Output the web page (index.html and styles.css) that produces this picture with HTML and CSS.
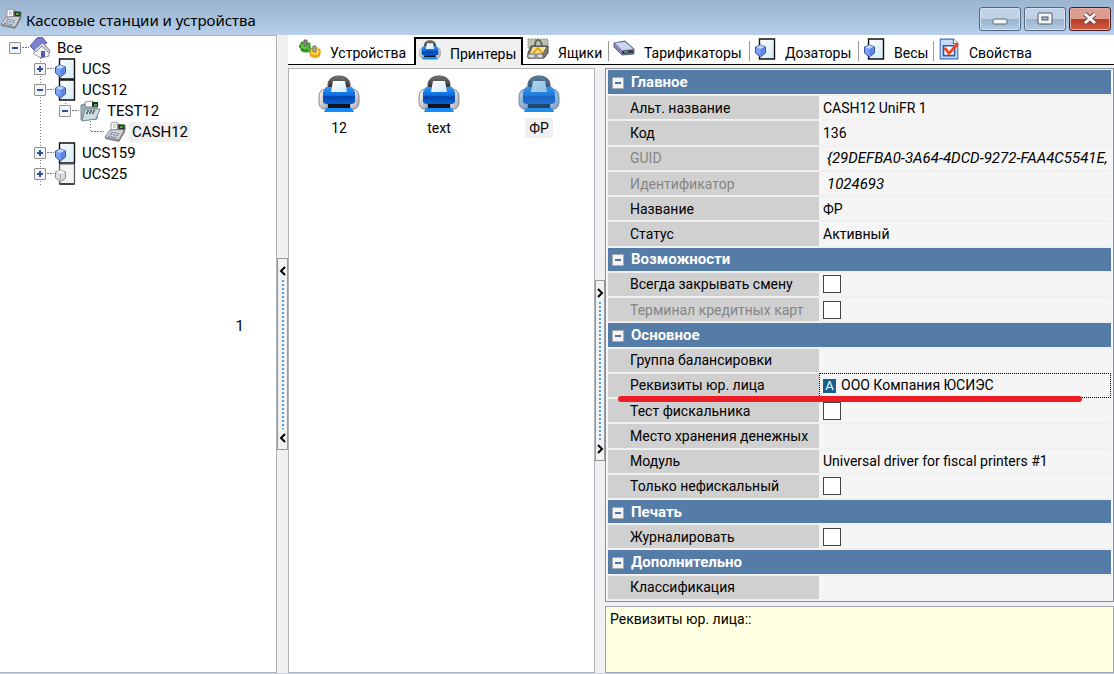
FILE: index.html
```html
<!DOCTYPE html>
<html lang="ru">
<head>
<meta charset="utf-8">
<title>Кассовые станции и устройства</title>
<link rel="stylesheet" href="styles.css">
</head>
<body>
<svg class="defs" width="0" height="0" aria-hidden="true">
  <defs>
    <linearGradient id="blue" x1="0" y1="0" x2="0" y2="1"><stop offset="0" stop-color="#2f97f5"/><stop offset=".5" stop-color="#0a6ade"/><stop offset=".55" stop-color="#0048b4"/><stop offset="1" stop-color="#0b5cd0"/></linearGradient>
    <linearGradient id="dark" x1="0" y1="0" x2="0" y2="1"><stop offset="0" stop-color="#777"/><stop offset="1" stop-color="#222"/></linearGradient>
    <linearGradient id="silver" x1="0" y1="0" x2="1" y2="1"><stop offset="0" stop-color="#fff"/><stop offset="1" stop-color="#a4a4a8"/></linearGradient>
    <linearGradient id="sheet" x1="0" y1="0" x2="1" y2="1"><stop offset="0" stop-color="#fff"/><stop offset="1" stop-color="#d3e9f4"/></linearGradient>
    <symbol id="printer" viewBox="0 0 42 38">
      <path d="M10 14V10C10 4 15 1 21 1s11 3 11 9v4z" fill="url(#dark)" stroke="#555"/>
      <path d="M7 14Q1 15 1 22v5q0 6 5 7h4V14z" fill="url(#silver)" stroke="#888"/>
      <path d="M35 14q6 1 6 8v5q0 6-5 7h-4V14z" fill="url(#silver)" stroke="#888"/>
      <path d="M8 12h26l3 5v9q0 3-4 3H9q-4 0-4-3v-9z" fill="url(#blue)"/>
      <path d="M15 6h12l2 11H13z" fill="url(#sheet)"/>
      <path d="M6 23q15 3 30 0" fill="none" stroke="#0a3f98" opacity=".5"/>
      <path d="M10 29h22v4H10z" fill="#10151d"/>
      <path d="M8 33h26l2 4H6z" fill="#168af4"/>
    </symbol>
    <symbol id="printer-selected" viewBox="0 0 42 38">
      <use href="#printer" width="42" height="38"/>
      <path d="M7 14l3-4C10 4 15 1 21 1s11 3 11 9l3 4q6 1 6 8v5q0 6-5 7v3H6v-3q-5-1-5-7v-5q0-7 6-8z" fill="#3d8fdc" opacity=".42"/>
    </symbol>
    <symbol id="station" viewBox="0 0 21 22">
      <path d="M5 1h15v20H5z" fill="url(#sheet)" stroke="#111" stroke-width="1.4"/>
      <path d="M6 7l5 2v6l-5 4-5-4V9z" fill="#7ba2f5" stroke="#345396"/>
      <path d="M2 9l4 2 4-2-4-2z" fill="#c1d6ff"/><path d="M6 11v7l4-3V9z" fill="#5b83e8"/>
    </symbol>
    <symbol id="station-off" viewBox="0 0 21 22">
      <path d="M5 1h15v20H5z" fill="#f4f4f4" stroke="#555" stroke-width="1.2"/><path d="M5 21h15" stroke="#444" stroke-width="2"/>
      <path d="M6 7l5 2v6l-5 4-5-4V9z" fill="#ddd" stroke="#888"/>
      <path d="M2 9l4 2 4-2-4-2z" fill="#f6f6f6"/><path d="M6 11v7" stroke="#aaa"/>
    </symbol>
    <symbol id="register" viewBox="0 0 22 22">
      <path d="M7 11V2l6-1 1 10z" fill="#fff" stroke="#999"/><path d="M9 4h3M9 6h3" stroke="#aaa"/>
      <path d="M6 9l15-1-6 11L1 16z" fill="#d0d0d4" stroke="#888"/>
      <path d="M1 16l14 3v2L1 18z" fill="#8c8c90"/><path d="M21 8v3l-6 10v-2z" fill="#777"/>
      <path d="M14 3l7 1v5l-7-1z" fill="#263326" stroke="#777"/><path d="M16 5h3v2h-3z" fill="#49b043"/>
      <path d="M7 11l9 2M6 13l9 2M4 15l9 2" stroke="#5479a5" stroke-dasharray="2 1"/>
    </symbol>
    <symbol id="folder" viewBox="0 0 22 22">
      <path d="M6 8V2l8-1v7z" fill="#fff" stroke="#999"/><path d="M13 2h6v5h-6z" fill="#243024"/><path d="M15 4h3v2h-3z" fill="#49b043"/>
      <path d="M2 20V5l4-1v3h12v12z" fill="#9fb2b8" stroke="#788"/>
      <path d="M6 9h15l-4 10-14 2z" fill="#cadde2" stroke="#788b92"/><path d="M8 11h9M7 13h9" stroke="#405058" stroke-width="1.3" stroke-dasharray="2 1"/>
    </symbol>
    <symbol id="home" viewBox="0 0 22 22">
      <path d="M5 11l9-6 6 8v6l-8 2-7-4z" fill="#f4f4f8" stroke="#999"/>
      <path d="M1 9L8 1l5-1 5 6-6 1-6 7z" fill="#7c7ed0" stroke="#5558a8"/>
      <path d="M12 7l2-1 7 8-1 2-7-7-6 6-2-2z" fill="#d9d9e5" stroke="#85859f"/>
      <path d="M12 14h4v6l-4 1z" fill="#555caa"/>
    </symbol>
    <symbol id="plug" viewBox="0 0 22 20">
      <ellipse cx="6" cy="7" rx="5" ry="4" fill="#58c63e" stroke="#2c8e20" stroke-width="2" stroke-dasharray="3 1"/>
      <path d="M1 8q5 6 11 1v3q-5 3-10 0z" fill="#329424"/>
      <path d="M5 1h3v6H5z" fill="#888" stroke="#666"/>
      <ellipse cx="16" cy="13" rx="5" ry="4" fill="#ffd746" stroke="#e39b00" stroke-width="2" stroke-dasharray="3 1"/>
      <path d="M11 14q5 5 10 0v3q-5 4-10 0z" fill="#eba311"/><path d="M14 7h3v6h-3z" fill="#aaa" stroke="#777"/>
    </symbol>
    <symbol id="drawer" viewBox="0 0 22 22">
      <path d="M1 1h20v9H1z" fill="#b9c3ae" stroke="#8c9684" stroke-dasharray="2 1"/><path d="M8 8q0-6 3-6t4 6" fill="none" stroke="#666" stroke-width="2"/>
      <path d="M4 8h17v7l-4 5H1v-5z" fill="#777" stroke="#444"/><path d="M6 9h13l-4 7H3z" fill="#ffe58a"/>
      <path d="M6 15l5-5 4 5" fill="none" stroke="#dda018" stroke-width="2"/><path d="M1 16h15v4H1z" fill="#ddd" stroke="#666"/><path d="M7 18h4" stroke="#555"/>
    </symbol>
    <symbol id="drive" viewBox="0 0 22 18">
      <path d="M1 3l11-2 9 8v5l-12 1L1 7z" fill="#8089b5" stroke="#596084"/>
      <path d="M2 3l10-1 8 7-11 1z" fill="#ced5f0"/><path d="M9 11l11-1v3l-11 1z" fill="#343b4a"/><path d="M11 12h4" stroke="#5be043"/>
    </symbol>
    <symbol id="props" viewBox="0 0 18 20">
      <path d="M1 1h12l4 4v14H1z" fill="#c6dcf8" stroke="#3c72c3"/><path d="M13 1v4h4" fill="#fff" stroke="#3c72c3"/>
      <path d="M4 7h10v9H4z" fill="#fff" stroke="#285dac" stroke-width="1.5"/><path d="M5 9l4 5 8-9" fill="none" stroke="#f14418" stroke-width="2.5"/>
    </symbol>
    <symbol id="left" viewBox="0 0 8 10"><path d="M6 1L2 5l4 4" fill="none" stroke="#000" stroke-width="2"/></symbol>
    <symbol id="right" viewBox="0 0 8 10"><path d="M2 1l4 4-4 4" fill="none" stroke="#000" stroke-width="2"/></symbol>
  </defs>
</svg>

<div class="window">
  <header class="titlebar">
    <svg class="icon"><use href="#register"/></svg>
    <h1 class="title">Кассовые станции и устройства</h1>
    <div class="window-buttons">
      <button class="win-btn" aria-label="Свернуть"><svg width="16" height="14" viewBox="0 0 16 14"><rect x="1" y="7" width="14" height="5" rx="1" fill="#f6f6f6" stroke="#596675"/></svg></button>
      <button class="win-btn" aria-label="Развернуть"><svg width="16" height="14" viewBox="0 0 16 14"><rect x="1" y="1" width="14" height="11" rx="1" fill="#f5f5f5" stroke="#4d5968"/><rect x="5" y="5" width="6" height="3" fill="#a9bdd6" stroke="#4d5968"/></svg></button>
      <button class="win-btn close" aria-label="Закрыть"><svg width="16" height="14" viewBox="0 0 16 14"><path d="M3 2l10 9M13 2L3 11" stroke="#634248" stroke-width="5"/><path d="M3 2l10 9M13 2L3 11" stroke="#fff" stroke-width="3"/></svg></button>
    </div>
  </header>

  <main class="workspace">
    <nav class="tree" aria-label="Станции">
      <ul>
        <li><div class="node"><button class="expander" aria-label="Свернуть Все"></button><i class="dots"></i><svg class="icon"><use href="#home"/></svg><span class="name">Все</span></div>
          <ul class="branch stations">
            <li><div class="node"><button class="expander plus" aria-label="Развернуть UCS"></button><i class="dots"></i><svg class="icon"><use href="#station"/></svg><span class="name">UCS</span></div></li>
            <li><div class="node"><button class="expander" aria-label="Свернуть UCS12"></button><i class="dots"></i><svg class="icon"><use href="#station"/></svg><span class="name">UCS12</span></div>
              <ul class="branch last">
                <li><div class="node"><button class="expander" aria-label="Свернуть TEST12"></button><i class="dots"></i><svg class="icon"><use href="#folder"/></svg><span class="name">TEST12</span></div>
                  <ul class="branch last">
                    <li><div class="node leaf"><i class="dots"></i><svg class="icon"><use href="#register"/></svg><span class="name selected">CASH12</span></div></li>
                  </ul>
                </li>
              </ul>
            </li>
            <li><div class="node"><button class="expander plus" aria-label="Развернуть UCS159"></button><i class="dots"></i><svg class="icon"><use href="#station"/></svg><span class="name">UCS159</span></div></li>
            <li><div class="node"><button class="expander plus" aria-label="Развернуть UCS25"></button><i class="dots"></i><svg class="icon"><use href="#station-off"/></svg><span class="name">UCS25</span></div></li>
          </ul>
        </li>
      </ul>
      <span class="marker">1</span>
    </nav>
    <div class="splitter"><button class="handle" aria-label="Скрыть дерево"><svg class="arrow"><use href="#left"/></svg><i class="grip"></i><svg class="arrow"><use href="#left"/></svg></button></div>

    <section class="content">
      <div class="tabs" role="tablist">
        <button class="tab first" role="tab"><svg class="icon"><use href="#plug"/></svg>Устройства</button>
        <button class="tab active" role="tab" aria-selected="true"><svg class="icon"><use href="#printer"/></svg>Принтеры</button>
        <button class="tab divided" role="tab"><svg class="icon"><use href="#drawer"/></svg>Ящики</button>
        <button class="tab divided" role="tab"><svg class="icon"><use href="#drive"/></svg>Тарификаторы</button>
        <button class="tab divided" role="tab"><svg class="icon"><use href="#station"/></svg>Дозаторы</button>
        <button class="tab divided" role="tab"><svg class="icon"><use href="#station"/></svg>Весы</button>
        <button class="tab" role="tab"><svg class="icon"><use href="#props"/></svg>Свойства</button>
      </div>
      <div class="panes">
        <div class="devices">
          <button class="device"><svg class="big-icon"><use href="#printer"/></svg><span class="caption">12</span></button>
          <button class="device"><svg class="big-icon"><use href="#printer"/></svg><span class="caption">text</span></button>
          <button class="device chosen"><svg class="big-icon"><use href="#printer-selected"/></svg><span class="caption">ФР</span></button>
        </div>
        <div class="splitter"><button class="handle" aria-label="Скрыть свойства"><svg class="arrow"><use href="#right"/></svg><i class="grip"></i><svg class="arrow"><use href="#right"/></svg></button></div>
        <div class="details">
          <div class="inspector">
            <table class="props">
              <colgroup><col class="label-col"><col></colgroup>
              <tr class="group"><th colspan="2"><button class="expander" aria-label="Свернуть"></button>Главное</th></tr>
              <tr><th>Альт. название</th><td>CASH12 UniFR 1</td></tr>
              <tr><th>Код</th><td>136</td></tr>
              <tr class="readonly"><th>GUID</th><td>{29DEFBA0-3A64-4DCD-9272-FAA4C5541E,</td></tr>
              <tr class="readonly"><th>Идентификатор</th><td>1024693</td></tr>
              <tr><th>Название</th><td>ФР</td></tr>
              <tr><th>Статус</th><td>Активный</td></tr>
              <tr class="group"><th colspan="2"><button class="expander" aria-label="Свернуть"></button>Возможности</th></tr>
              <tr><th><label for="c1">Всегда закрывать смену</label></th><td><input type="checkbox" id="c1"></td></tr>
              <tr class="readonly"><th><label for="c2">Терминал кредитных карт</label></th><td><input type="checkbox" id="c2"></td></tr>
              <tr class="group"><th colspan="2"><button class="expander" aria-label="Свернуть"></button>Основное</th></tr>
              <tr><th>Группа балансировки</th><td></td></tr>
              <tr class="current"><th>Реквизиты юр. лица<i class="underline"></i></th><td><span class="badge">A</span>ООО Компания ЮСИЭС</td></tr>
              <tr><th><label for="c3">Тест фискальника</label></th><td><input type="checkbox" id="c3"></td></tr>
              <tr><th>Место хранения денежных</th><td></td></tr>
              <tr><th>Модуль</th><td>Universal driver for fiscal printers #1</td></tr>
              <tr><th><label for="c4">Только нефискальный</label></th><td><input type="checkbox" id="c4"></td></tr>
              <tr class="group"><th colspan="2"><button class="expander" aria-label="Свернуть"></button>Печать</th></tr>
              <tr><th><label for="c5">Журналировать</label></th><td><input type="checkbox" id="c5"></td></tr>
              <tr class="group"><th colspan="2"><button class="expander" aria-label="Свернуть"></button>Дополнительно</th></tr>
              <tr><th>Классификация</th><td></td></tr>
            </table>
          </div>
          <p class="hint">Реквизиты юр. лица::</p>
        </div>
      </div>
    </section>
  </main>
</div>
</body>
</html>
```
FILE: styles.css
```css
* { box-sizing: border-box; }
body {
  margin: 0;
  font: 14px/20px Roboto, "Liberation Sans", sans-serif;
  color: #000;
  background: #f0f0f0;
}
button { font: inherit; color: inherit; padding: 0; border: 0; background: none; }
ul { list-style: none; margin: 0; padding: 0; }
.defs { position: absolute; }
.icon { width: 22px; height: 22px; flex: none; }

.window { display: flex; flex-direction: column; min-height: 100vh; border-bottom: 1px solid #c3d5e6; }

.titlebar {
  display: flex;
  align-items: center;
  height: 35px;
  padding: 2px 3px 0 0;
  background: linear-gradient(#9bb4d0, #a3bcd8 40%, #b8d0ea);
}
.title { flex: 1; margin: 0; padding: 2px 0 0 4px; font: 15px/20px "Noto Sans", sans-serif; }
.window-buttons { display: flex; gap: 3px; }
.win-btn {
  display: flex;
  align-items: center;
  justify-content: center;
  width: 42px;
  height: 24px;
  border: 1px solid #52667f;
  border-radius: 3px;
  background: linear-gradient(#c1d2e6 48%, #9bb3cf 50%, #b5cbe3);
  box-shadow: inset 0 0 0 1px #d5e2f0;
}
.close {
  border-color: #4b1c25;
  background: linear-gradient(#dd9c90 48%, #b93a25 50%, #ca5f43);
  box-shadow: inset 0 0 0 1px #e5afa5;
}

.workspace { flex: 1; display: grid; grid-template-columns: 277px 11px 1fr; }

.tree { position: relative; padding: 1px 9px; font-size: 15px; background: #fff; border: solid #b0b2ba; border-width: 1px 1px 1px 0; }
.node { display: flex; align-items: center; height: 21px; }
.branch { padding-left: 25px; background: repeating-linear-gradient(#777 0 1px, #fff 1px 3px) 31px 0 / 1px 100% no-repeat; }
.stations { padding-bottom: 2px; }
.last { background-size: 1px 11px; }
.leaf { padding-left: 6px; }
.leaf .dots { width: 14px; }
.dots { flex: none; width: 8px; height: 1px; background: repeating-linear-gradient(90deg, #fff 0 1px, #777 1px 3px); }
.name { margin-left: 3px; padding: 0 3px; }
.selected { background: #f0f0f0; }
.expander {
  flex: none;
  width: 12px;
  height: 12px;
  border: 1px solid #919191;
  border-radius: 1px;
  background: linear-gradient(#2d4f9e, #2d4f9e) center / 6px 2px no-repeat, #f4f4f4;
}
.plus {
  background: linear-gradient(#2d4f9e, #2d4f9e) center / 6px 2px no-repeat, linear-gradient(#2d4f9e, #2d4f9e) center / 2px 6px no-repeat, #f4f4f4;
}
.marker { position: absolute; right: 32px; top: 44%; }

.splitter { display: flex; align-items: center; background: #f0f0f0; }
.handle {
  display: flex;
  flex-direction: column;
  align-items: center;
  width: 11px;
  height: 30%;
  padding: 7px 0 6px;
  border: 1px solid #9a9ba0;
  background: #f2f2f2;
}
.arrow { width: 8px; height: 10px; flex: none; }
.grip { flex: 1; width: 2px; margin: 4px 0; background: repeating-linear-gradient(#4e9ee0 0 2px, #f2f2f2 2px 4px); }

.content { display: flex; flex-direction: column; min-width: 0; }
.tabs {
  display: grid;
  grid-template-columns: 126px 109px 86px 141px 109px 75px 1fr;
  height: 30px;
  padding-top: 2px;
  background: #fff;
  border-bottom: 1px solid #000;
}
.tab { position: relative; display: flex; align-items: center; gap: 9px; padding: 4px 0 0 4px; white-space: nowrap; }
.tab .icon { margin-top: -7px; }
.tab.first { padding-left: 11px; }
.tab.active { margin-bottom: -1px; padding: 3px 0 0 3px; border: 2px solid #000; border-bottom: 0; background: #f0f0f0; }
.divided::after { content: ""; position: absolute; right: 0; top: 4px; height: 20px; border-right: 1px solid #999; }

.panes { flex: 1; display: grid; grid-template-columns: 307px 10px 1fr; padding-top: 3px; }
.devices { display: flex; align-items: flex-start; padding: 6px 0; background: #fff; border: 1px solid #b0b2ba; }
.device { width: 100px; display: flex; flex-direction: column; align-items: center; gap: 5px; }
.big-icon { width: 42px; height: 38px; }
.caption { padding: 0 4px; }
.chosen .caption { background: #f0f0f0; }

.details { display: flex; flex-direction: column; gap: 4px; min-width: 0; }
.inspector { flex: 1; display: grid; padding: 1px 2px 0; border: 1px solid #878c96; background: #f5f5f5; }
.props { width: 100%; height: 100%; table-layout: fixed; border-collapse: collapse; }
.label-col { width: 211px; }
.props th, .props td {
  height: 25px;
  padding: 0 0 0 4px;
  text-align: left;
  font-weight: 400;
  white-space: nowrap;
  overflow: hidden;
  border-bottom: 2px solid #f0f0f0;
}
.props th { padding-left: 22px; background: #d0d0d0; }
.props td { background: #f5f5f5; }
.props .group th { padding-left: 4px; background: #557ca6; color: #fff; font-size: 15px; font-weight: 700; }
.group .expander { margin-right: 7px; vertical-align: -1px; border-color: #aaa; background: linear-gradient(#5270b0, #5270b0) center / 6px 2px no-repeat, #f4f4f4; }
.readonly th { color: #858585; }
.props .readonly td { padding-left: 8px; font-size: 15px; font-style: italic; }
.props input {
  appearance: none;
  display: block;
  width: 18px;
  height: 18px;
  margin: 0;
  border: 1px solid #444;
  background: #fff;
}
.props .readonly td:has(input) { padding-left: 4px; }
.current { position: relative; }
.props .current th { overflow: visible; }
.props .current td { outline: 1px dotted #000; outline-offset: -1px; }
.underline { position: absolute; z-index: 1; left: 10px; right: 29px; bottom: -4px; height: 6px; border-radius: 3px; background: #ed1c24; }
.badge { display: inline-block; width: 13px; margin-right: 5px; background: #175f92; color: #fff; font-size: 13px; line-height: 14px; text-align: center; }
.hint { height: 67px; margin: 0; padding: 2px 4px; background: #ffffe1; border: 1px solid #a0a5ad; }
```
